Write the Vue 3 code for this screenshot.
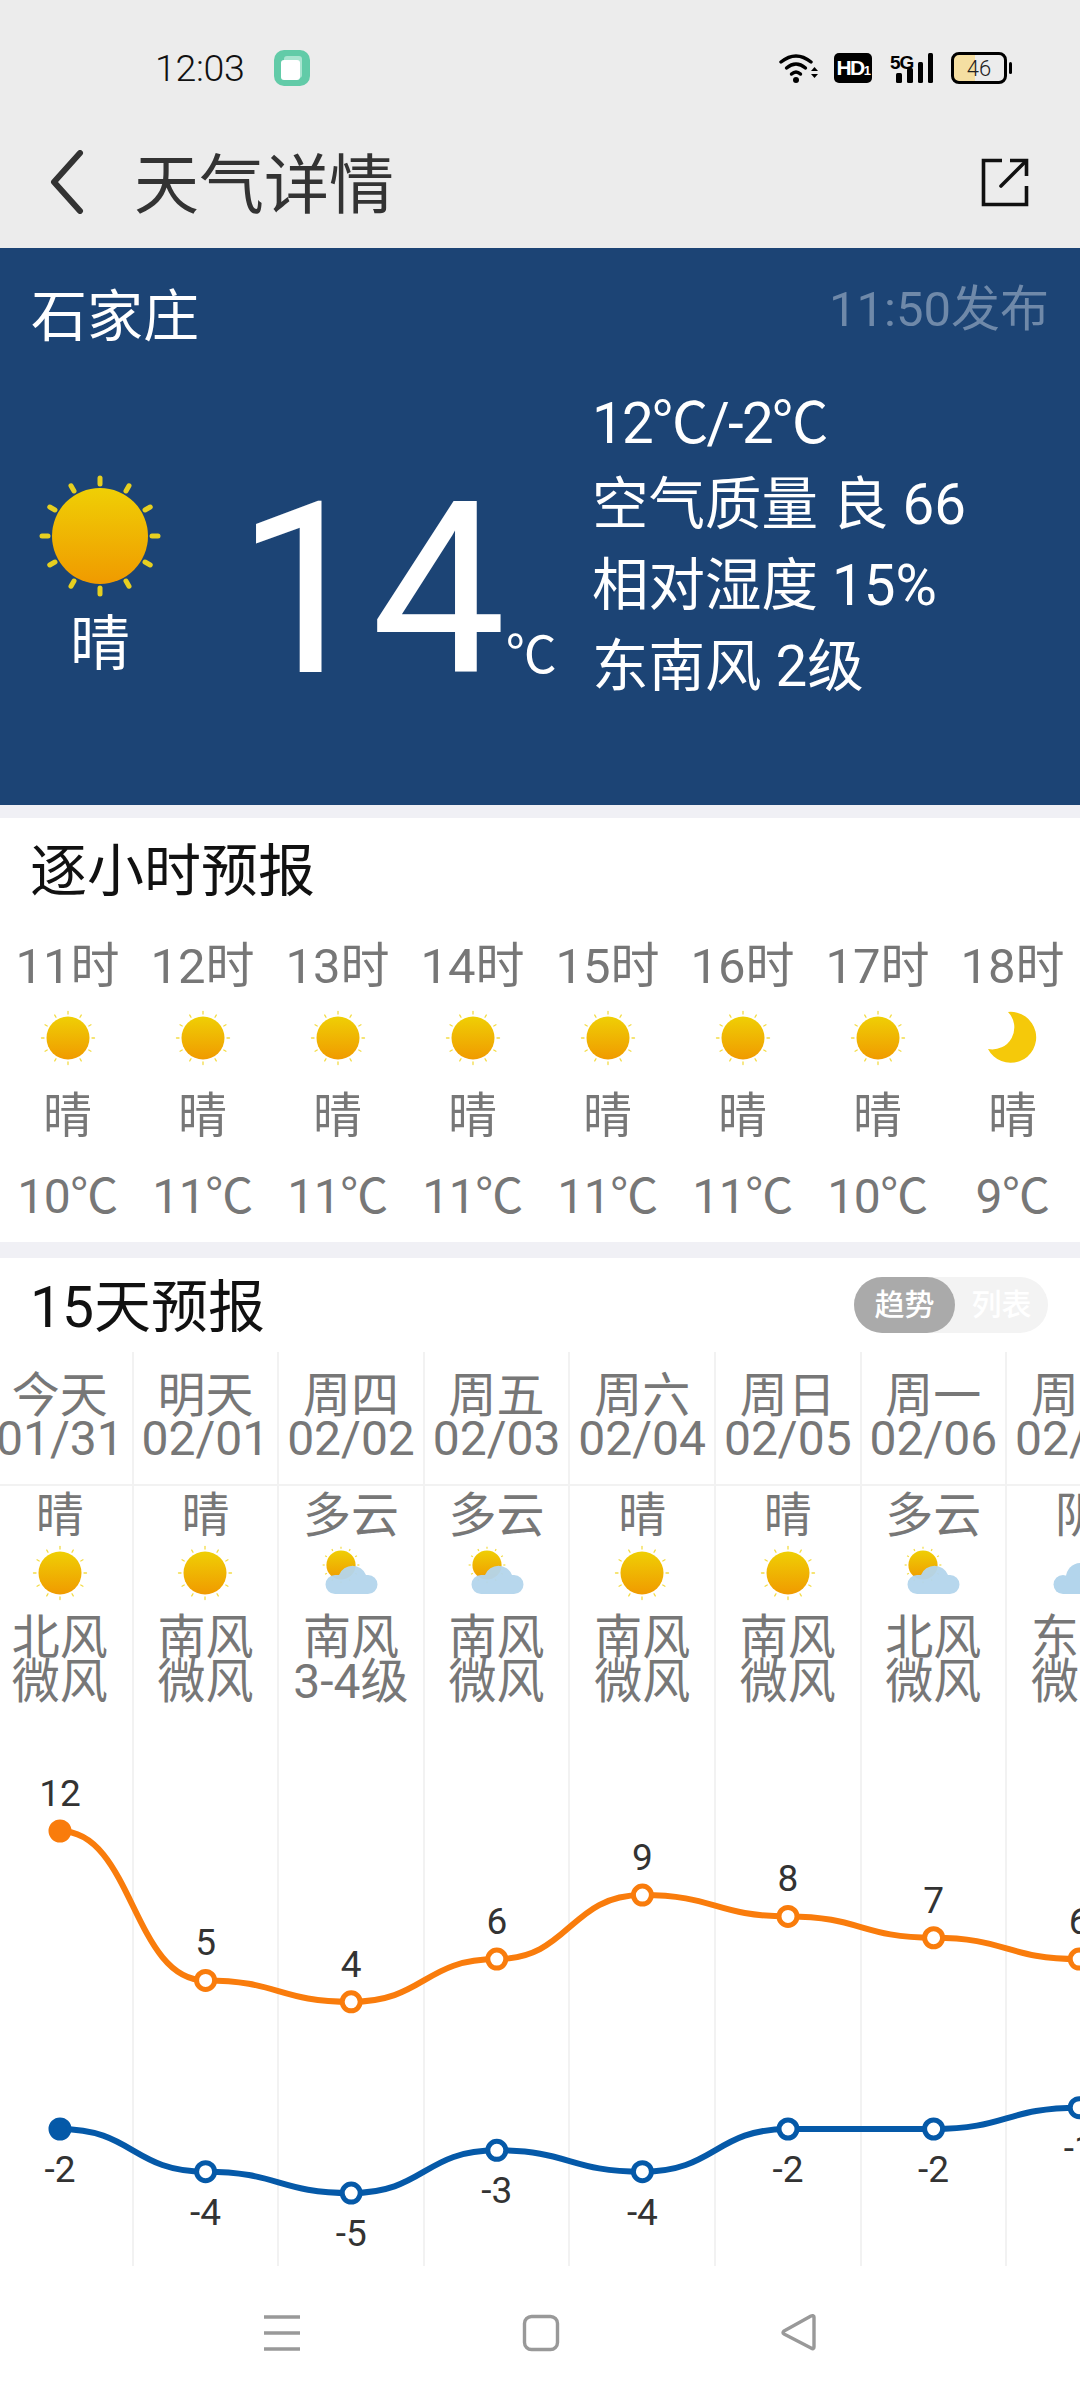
<script setup>
const hours = [
  ['11时', '10℃'], ['12时', '11℃'], ['13时', '11℃'], ['14时', '11℃'],
  ['15时', '11℃'], ['16时', '11℃'], ['17时', '10℃'], ['18时', '9℃']
].map(([h, t], i) => ({ h, t, icon: i === 7 ? '#moon' : '#sun' }))

const days = [
  { d: '今天', date: '01/31', w: '晴', icon: 'sun', a: '北风', b: '微风', hi: 12, lo: -2 },
  { d: '明天', date: '02/01', w: '晴', icon: 'sun', a: '南风', b: '微风', hi: 5, lo: -4 },
  { d: '周四', date: '02/02', w: '多云', icon: 'part', a: '南风', b: '3-4级', hi: 4, lo: -5 },
  { d: '周五', date: '02/03', w: '多云', icon: 'part', a: '南风', b: '微风', hi: 6, lo: -3 },
  { d: '周六', date: '02/04', w: '晴', icon: 'sun', a: '南风', b: '微风', hi: 9, lo: -4 },
  { d: '周日', date: '02/05', w: '晴', icon: 'sun', a: '南风', b: '微风', hi: 8, lo: -2 },
  { d: '周一', date: '02/06', w: '多云', icon: 'part', a: '北风', b: '微风', hi: 7, lo: -2 },
  { d: '周二', date: '02/07', w: '阴', icon: 'cloud', a: '东风', b: '微风', hi: 6, lo: -1 }
]

const colW = 145.6
const px = (i) => 60 + i * colW
const hiY = (v) => 145 + (12 - v) * 21.35
const loY = (v) => 443 + (-2 - v) * 21.35

function curve(ys) {
  return ys.reduce((d, y, i) => {
    const x = px(i)
    if (i === 0) return `M${x} ${y}`
    const c = colW / 2
    return `${d} C${x - colW + c} ${ys[i - 1]} ${x - c} ${y} ${x} ${y}`
  }, '')
}
const hiPts = days.map((d, i) => ({ x: px(i), y: hiY(d.hi), v: d.hi, first: i === 0 }))
const loPts = days.map((d, i) => ({ x: px(i), y: loY(d.lo), v: d.lo, first: i === 0 }))
const hiPath = curve(hiPts.map((p) => p.y))
const loPath = curve(loPts.map((p) => p.y))
const rays = Array.from({ length: 12 }, (_, i) => i * 30)
</script>

<template>
  <div class="page">
    <svg class="defs" width="0" height="0" aria-hidden="true">
      <defs>
        <linearGradient id="sung" x1="0" y1="0" x2="0" y2="1">
          <stop offset="0" stop-color="#efcf05" />
          <stop offset="1" stop-color="#f09a00" />
        </linearGradient>
        <symbol id="sun" viewBox="-30 -30 60 60">
          <line v-for="r in rays" :key="r" x1="0" y1="-24" x2="0" y2="-26.5" :transform="`rotate(${r})`" stroke="#f3dc45" stroke-width="1.3" stroke-linecap="round" />
          <circle r="21.5" fill="url(#sung)" />
        </symbol>
        <symbol id="moon" viewBox="-30 -30 60 60">
          <path d="M-5 -26 A25.5 25.5 0 1 1 -25 11 A22 22 0 0 0 -5 -26 Z" fill="#f5c90a" />
        </symbol>
        <symbol id="cloud" viewBox="-30 -30 60 60">
          <g fill="#b3d5ec">
            <circle cx="-16" cy="11.5" r="9.5" />
            <circle cx="1.5" cy="4.5" r="14.5" />
            <circle cx="17" cy="11.5" r="9.5" />
            <rect x="-16" y="5" width="33" height="16" />
          </g>
        </symbol>
        <symbol id="part" viewBox="-30 -30 60 60">
          <g transform="translate(-10 -8) scale(.68)">
            <line v-for="r in rays" :key="r" x1="0" y1="-24" x2="0" y2="-27" :transform="`rotate(${r})`" stroke="#f3dc45" stroke-width="1.8" />
            <circle r="21.5" fill="url(#sung)" />
          </g>
          <g fill="#b3d5ec" opacity=".95">
            <path d="M-16 21 A9.5 9.5 0 0 1 -16 2 L-12 2 A14.5 14.5 0 0 1 15 2 L17 2 A9.5 9.5 0 0 1 17 21 Z" />
          </g>
        </symbol>
      </defs>
    </svg>

    <header class="top">
      <div class="status">
        <div class="status-left">
          <span class="time">12:03</span>
          <svg class="app" width="36" height="36" viewBox="0 0 36 36">
            <rect width="36" height="36" rx="10" fill="#62cba8" />
            <rect x="10" y="6" width="18" height="22" rx="3" fill="#a9e4d0" />
            <rect x="7" y="10" width="19" height="20" rx="3" fill="#fff" />
          </svg>
        </div>
        <div class="status-right">
          <svg width="42" height="30" viewBox="0 0 42 30">
            <g fill="none" stroke="#000" stroke-width="3.4" stroke-linecap="round">
              <path d="M2 9 Q17 -3 32 9" />
              <path d="M7.5 15 Q17 7 26.5 15" />
              <path d="M12.5 21 Q17 17 21.5 21" />
            </g>
            <circle cx="17" cy="27" r="3" fill="#000" />
            <path d="M32 18 L35.5 14 L39 18 Z M32 21 L39 21 L35.5 25 Z" fill="#000" />
          </svg>
          <div class="hd">HD<small>1</small></div>
          <div class="sig">
            <span class="five">5G</span>
            <svg width="44" height="30" viewBox="0 0 44 30">
              <rect x="6" y="20" width="6" height="10" rx="1.5" />
              <rect x="17" y="15" width="6" height="15" rx="1.5" />
              <rect x="28" y="9" width="5" height="21" rx="1.5" />
              <rect x="38" y="0" width="5" height="30" rx="1.5" />
            </svg>
          </div>
          <div class="batt">
            <div class="batt-body"><span class="batt-num">46</span></div>
            <span class="batt-cap"></span>
          </div>
        </div>
      </div>
      <div class="bar">
        <svg class="back" width="38" height="64" viewBox="0 0 38 64">
          <path d="M32 3 L6 32 L32 61" fill="none" stroke="#333" stroke-width="6" stroke-linecap="round" stroke-linejoin="round" />
        </svg>
        <h1 class="title">天气详情</h1>
        <svg class="share" width="50" height="50" viewBox="0 0 50 50">
          <path d="M22 3.5 H3.5 V47.5 H46.5 V29" fill="none" stroke="#111" stroke-width="3.6" />
          <path d="M30 3.5 H46.5 V19" fill="none" stroke="#111" stroke-width="3.6" />
          <path d="M21 29 L46 4" fill="none" stroke="#111" stroke-width="3.6" stroke-linecap="round" />
        </svg>
      </div>
    </header>

    <section class="hero">
      <div class="hero-top">
        <span class="city">石家庄</span>
        <span class="pub">11:50发布</span>
      </div>
      <div class="hero-main">
        <div class="hero-now">
          <svg class="hero-sun" width="124" height="124" viewBox="-62 -62 124 124">
            <line v-for="r in rays" :key="r" x1="0" y1="-52" x2="0" y2="-58" :transform="`rotate(${r})`" stroke="#e6cf20" stroke-width="5" stroke-linecap="round" />
            <circle r="48" fill="url(#sung)" />
          </svg>
          <span class="hero-w">晴</span>
        </div>
        <div class="hero-temp"><span class="big">14</span><span class="unit">℃</span></div>
        <ul class="hero-info">
          <li class="range">12℃/-2℃</li>
          <li>空气质量 良 66</li>
          <li>相对湿度 15%</li>
          <li>东南风 2级</li>
        </ul>
      </div>
    </section>

    <section class="hourly">
      <h2 class="sec-title">逐小时预报</h2>
      <div class="hours">
        <div v-for="h in hours" :key="h.h" class="hour">
          <span class="h-text">{{ h.h }}</span>
          <svg class="h-icon" width="60" height="60"><use :href="h.icon" /></svg>
          <span class="h-text h-w">晴</span>
          <span class="h-text h-t">{{ h.t }}</span>
        </div>
      </div>
    </section>

    <section class="daily">
      <div class="daily-head">
        <h2 class="sec-title">15天预报</h2>
        <div class="toggle"><span class="tg on">趋势</span><span class="tg">列表</span></div>
      </div>
      <div class="grid">
        <div class="cols">
          <div v-for="d in days" :key="d.date" class="col">
            <div class="c-head">
              <span>{{ d.d }}</span>
              <span>{{ d.date }}</span>
            </div>
            <div class="c-info">
              <span class="c-w">{{ d.w }}</span>
              <svg class="c-icon" width="60" height="60"><use :href="'#' + d.icon" /></svg>
              <span class="c-wind">{{ d.a }}</span>
              <span class="c-wind">{{ d.b }}</span>
            </div>
          </div>
        </div>
        <svg class="chart" width="1080" height="560" viewBox="0 0 1080 560">
          <path :d="hiPath" fill="none" stroke="#f97c0c" stroke-width="6" />
          <path :d="loPath" fill="none" stroke="#0559a8" stroke-width="6" />
          <g v-for="p in hiPts" :key="'h' + p.x">
            <circle :cx="p.x" :cy="p.y" r="9" :fill="p.first ? '#f97c0c' : '#fff'" stroke="#f97c0c" stroke-width="5" />
            <text :x="p.x" :y="p.y - 25" class="lbl" text-anchor="middle">{{ p.v }}</text>
          </g>
          <g v-for="p in loPts" :key="'l' + p.x">
            <circle :cx="p.x" :cy="p.y" r="9" :fill="p.first ? '#0559a8' : '#fff'" stroke="#0559a8" stroke-width="5" />
            <text :x="p.x" :y="p.y + 53" class="lbl" text-anchor="middle">{{ p.v }}</text>
          </g>
        </svg>
      </div>
    </section>

    <nav class="nav">
      <svg width="40" height="38" viewBox="0 0 40 38">
        <path d="M2 3 H38 M2 19 H38 M2 35 H38" stroke="#999" stroke-width="3.4" fill="none" />
      </svg>
      <svg width="38" height="38" viewBox="0 0 38 38">
        <rect x="2.5" y="2.5" width="33" height="33" rx="7" fill="none" stroke="#999" stroke-width="3.4" />
      </svg>
      <svg width="38" height="38" viewBox="0 0 38 38">
        <path d="M34 3 V33 Q34 36 31 34 L4 20 Q2 19 4 17 L31 2 Q34 1 34 3 Z" fill="none" stroke="#999" stroke-width="3.4" stroke-linejoin="round" />
      </svg>
    </nav>
  </div>
</template>

<style>
html, body { margin: 0; background: #fff; }
</style>

<style scoped>
.page {
  width: 1080px;
  height: 2400px;
  overflow: hidden;
  display: flex;
  flex-direction: column;
  background: #fff;
  font-family: Roboto, "Noto Sans CJK SC", sans-serif;
}
.defs { display: block; height: 0; width: 0; overflow: hidden; }
h1, h2, ul { margin: 0; padding: 0; font-weight: 400; }
li { list-style: none; }

.top { height: 248px; background: #ececec; flex: none; }
.status {
  height: 136px;
  display: flex;
  align-items: center;
  justify-content: space-between;
  padding: 0 68px 0 155px;
}
.status-left, .status-right { display: flex; align-items: center; }
.time { font-size: 37.5px; font-weight: 300; color: #111; margin-right: 29px; letter-spacing: -.3px; }
.app { display: block; }
.status-right { gap: 13px; }
.status-right svg { display: block; }
.hd {
  width: 38px; height: 30px; border-radius: 5px; background: #000; color: #fff;
  font: 700 21px/30px "Liberation Sans", sans-serif; text-align: center; letter-spacing: -1.5px;
  margin-right: 5px;
}
.hd small { font-size: 13px; }
.sig { display: flex; width: 44px; height: 30px; }
.sig svg { fill: #000; margin-left: -44px; }
.five { font: 700 19px/19px "Liberation Sans", sans-serif; width: 44px; color: #000; letter-spacing: -1px; }
.batt { display: flex; align-items: center; margin-left: 4px; gap: 2px; }
.batt-body {
  width: 50px; height: 26px; border: 3px solid #000; border-radius: 8px; display: flex;
  align-items: center; justify-content: center; overflow: hidden; background-image: linear-gradient(90deg, #f5dfa2 42%, transparent 42%);
  font-size: 22px; font-weight: 300; color: #222;
}
.batt-cap { width: 3px; height: 12px; background: #000; border-radius: 2px; }

.bar { height: 112px; box-sizing: border-box; display: flex; align-items: center; padding: 0 50px 20px 48px; }
.title { font-size: 65px; line-height: 80px; color: #333; margin: 8px 0 0 48px; flex: 1; }
.back, .share { display: block; flex: none; }

.hero { height: 557px; background: #1c4475; color: #fff; flex: none; display: flex; flex-direction: column; }
.hero-top { display: flex; justify-content: space-between; padding: 30px 31px 0; height: 80px; }
.city { font-size: 56px; line-height: 78px; }
.pub { font-size: 49px; line-height: 64px; color: #6f89a9; }
.hero-main { display: flex; padding-top: 24px; }
.hero-now { width: 200px; display: flex; flex-direction: column; align-items: center; padding-top: 92px; }
.hero-sun { display: block; }
.hero-w { font-size: 60px; line-height: 80px; margin-top: 7px; }
.hero-temp { width: 392px; display: flex; align-items: flex-start; padding-top: 88px; padding-left: 36px; box-sizing: border-box; }
.big { font-size: 240px; line-height: 240px; font-weight: 400; }
.unit { font-size: 51px; line-height: 60px; margin-top: 156px; margin-left: 0; }
.hero-info { font-size: 56.5px; line-height: 81px; padding-top: 2px; white-space: nowrap; }
.range { letter-spacing: -1.8px; }

.hourly { height: 424px; flex: none; border-top: 13px solid #f0f0f5; border-bottom: 16px solid #f0f0f5; background: #fff; }
.sec-title { font-size: 57px; line-height: 72px; color: #111; padding-left: 30px; }
.hourly .sec-title { padding-top: 18px; }
.hours { display: flex; margin-top: 29px; }
.hour { width: 135px; flex: none; display: flex; flex-direction: column; align-items: center; }
.h-text { font-size: 49px; line-height: 60px; color: #777; white-space: nowrap; }
.h-icon { display: block; margin: 11px 0 19px; }
.h-t { margin-top: 20px; font-size: 48px; letter-spacing: -.5px; }

.daily { flex: 1; min-height: 0; }
.daily-head { display: flex; align-items: center; justify-content: space-between; height: 94px; padding-right: 32px; }
.daily-head .sec-title { padding-top: 6px; }
.toggle { display: flex; width: 194px; height: 56px; border-radius: 28px; background: #f3f3f3; }
.tg { flex: 1; font-size: 30px; line-height: 56px; text-align: center; color: #fff; font-weight: 500; }
.tg.on { flex: none; width: 101px; background: #aaa; border-radius: 28px; }
.grid { position: relative; height: 914px; overflow: hidden; }
.cols { display: flex; margin-left: -12px; }
.col { width: 145.6px; flex: none; height: 914px; box-sizing: border-box; border-right: 2px solid #f2f2f2; display: flex; flex-direction: column; align-items: center; }
.c-head { width: 100%; height: 110px; border-bottom: 2px solid #f2f2f2; display: flex; flex-direction: column; align-items: center; padding-top: 22px; margin-bottom: 1px; flex: none; }
.c-head span { font-size: 48px; line-height: 43px; color: #777; white-space: nowrap; }
.c-info { display: flex; flex-direction: column; align-items: center; padding-top: 2px; }
.c-w { font-size: 48px; line-height: 54px; color: #777; white-space: nowrap; }
.c-icon { display: block; margin: 0 0 13px; }
.c-wind { font-size: 48px; line-height: 44px; color: #777; white-space: nowrap; }
.chart { position: absolute; left: 0; top: 334px; display: block; }
.lbl { font-size: 37px; fill: #333; font-family: Roboto, sans-serif; }

.nav { height: 134px; flex: none; background: #fff; display: flex; align-items: center; justify-content: center; gap: 220px; }
</style>
